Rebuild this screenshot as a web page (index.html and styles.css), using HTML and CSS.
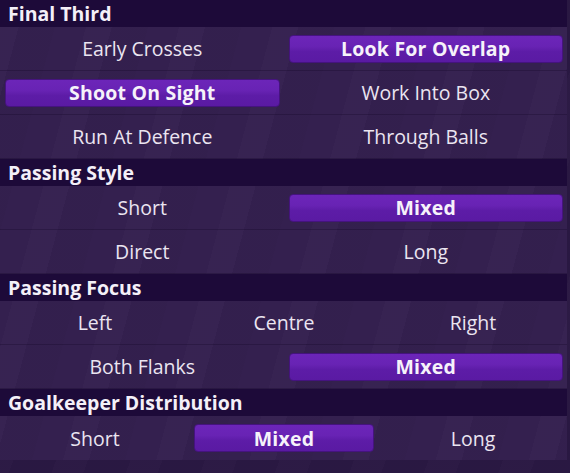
FILE: index.html
```html
<!doctype html>
<html lang="en">
<head>
  <meta charset="utf-8">
  <title>Team Instructions</title>
  <link rel="stylesheet" href="styles.css">
</head>
<body>
<div class="panel">
  <h2 class="section-title">Final Third</h2>
  <div class="row cols-2">
    <div class="opt">Early Crosses</div>
    <div class="opt"><span class="btn">Look For Overlap</span></div>
  </div>
  <div class="row cols-2">
    <div class="opt"><span class="btn">Shoot On Sight</span></div>
    <div class="opt">Work Into Box</div>
  </div>
  <div class="row cols-2">
    <div class="opt">Run At Defence</div>
    <div class="opt">Through Balls</div>
  </div>

  <h2 class="section-title">Passing Style</h2>
  <div class="row cols-2">
    <div class="opt">Short</div>
    <div class="opt"><span class="btn">Mixed</span></div>
  </div>
  <div class="row cols-2">
    <div class="opt">Direct</div>
    <div class="opt">Long</div>
  </div>

  <h2 class="section-title">Passing Focus</h2>
  <div class="row cols-3">
    <div class="opt">Left</div>
    <div class="opt">Centre</div>
    <div class="opt">Right</div>
  </div>
  <div class="row cols-2">
    <div class="opt">Both Flanks</div>
    <div class="opt"><span class="btn">Mixed</span></div>
  </div>

  <h2 class="section-title">Goalkeeper Distribution</h2>
  <div class="row cols-3">
    <div class="opt">Short</div>
    <div class="opt"><span class="btn">Mixed</span></div>
    <div class="opt">Long</div>
  </div>
</div>
</body>
</html>
```

FILE: styles.css
```css
html, body, h2 {
  margin: 0;
  padding: 0;
}

*, *:before, *:after {
  box-sizing: border-box;
}

body {
  width: 570px;
  height: 473px;
  overflow: hidden;
  font-family: 'Open Sans', sans-serif;
  color: #ebe5f1;
  background-color: #2a1843;
  background-image: repeating-linear-gradient(110deg, rgba(255,255,255,0.012) 0 30px, rgba(0,0,0,0.015) 30px 70px);
}

.panel {
  width: 567px;
  background-color: #34204f;
  background-image: repeating-linear-gradient(105deg, rgba(255,255,255,0.015) 0 25px, rgba(0,0,0,0.02) 25px 60px, rgba(255,255,255,0) 60px 90px);
}

.section-title {
  height: 27px;
  padding-left: 8px;
  background: #1d0a39;
  font-size: 19.5px;
  font-weight: 700;
  line-height: 27px;
  color: #f4f0f8;
}

.row {
  display: grid;
  height: 44px;
  border-bottom: 1px solid rgba(20, 6, 40, 0.3);
}

.row:last-child {
  border-bottom: 0;
}

.cols-2 {
  grid-template-columns: 1fr 1fr;
}

.cols-3 {
  grid-template-columns: 1fr 1fr 1fr;
}

.opt {
  display: flex;
  align-items: center;
  justify-content: center;
  padding: 0 4px 0 5px;
  font-size: 19.5px;
}

.btn {
  display: flex;
  align-items: center;
  justify-content: center;
  width: 100%;
  height: 28px;
  border: 1px solid #45137f;
  border-radius: 4px;
  background: linear-gradient(#6c25b9 0, #6823b4 40%, #5d1ca7 60%, #5a1aa3 100%);
  font-weight: 700;
  font-size: 19.5px;
  letter-spacing: 0.2px;
  color: #f6f2fa;
}
```
